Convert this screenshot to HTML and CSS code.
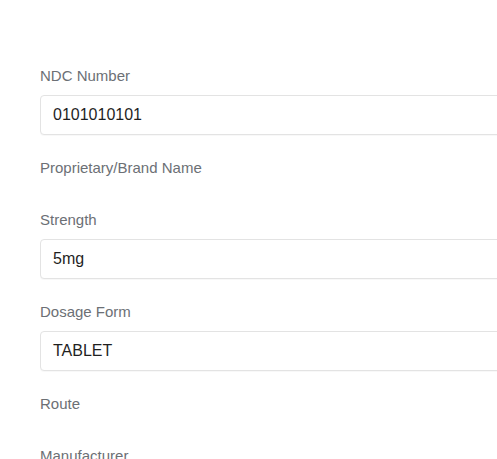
FILE: index.html
```html
<!DOCTYPE html>
<html>
<head>
<meta charset="utf-8">
<link rel="stylesheet" href="styles.css">
</head>
<body>
<div class="form">
  <div class="field">
    <div class="label">NDC Number</div>
    <div class="value">0101010101</div>
  </div>
  <div class="field">
    <div class="label">Proprietary/Brand Name</div>
  </div>
  <div class="field">
    <div class="label">Strength</div>
    <div class="value">5mg</div>
  </div>
  <div class="field">
    <div class="label">Dosage Form</div>
    <div class="value">TABLET</div>
  </div>
  <div class="field">
    <div class="label">Route</div>
  </div>
  <div class="field">
    <div class="label">Manufacturer</div>
  </div>
</div>
</body>
</html>
```
FILE: styles.css
```css
html, body {
  margin: 0;
  padding: 0;
  background: #ffffff;
  overflow: hidden;
}
body {
  font-family: "Liberation Sans", Arial, sans-serif;
}
.form {
  padding: 65px 0 0 40px;
  width: 600px;
  display: flex;
  flex-direction: column;
}
.field {
  display: flex;
  flex-direction: column;
  margin-bottom: 22px;
}
.label {
  font-size: 15px;
  line-height: 20px;
  height: 20px;
  padding-top: 1px;
  color: #6c7075;
  margin-bottom: 9px;
}
.value {
  box-sizing: border-box;
  height: 40px;
  border: 1px solid #e3e3e3;
  border-radius: 4px;
  box-shadow: 0 1px 1px rgba(0,0,0,0.03);
  padding: 0 12px;
  display: flex;
  align-items: center;
  font-size: 16px;
  color: #1f1f1f;
  background: #fff;
}
```
